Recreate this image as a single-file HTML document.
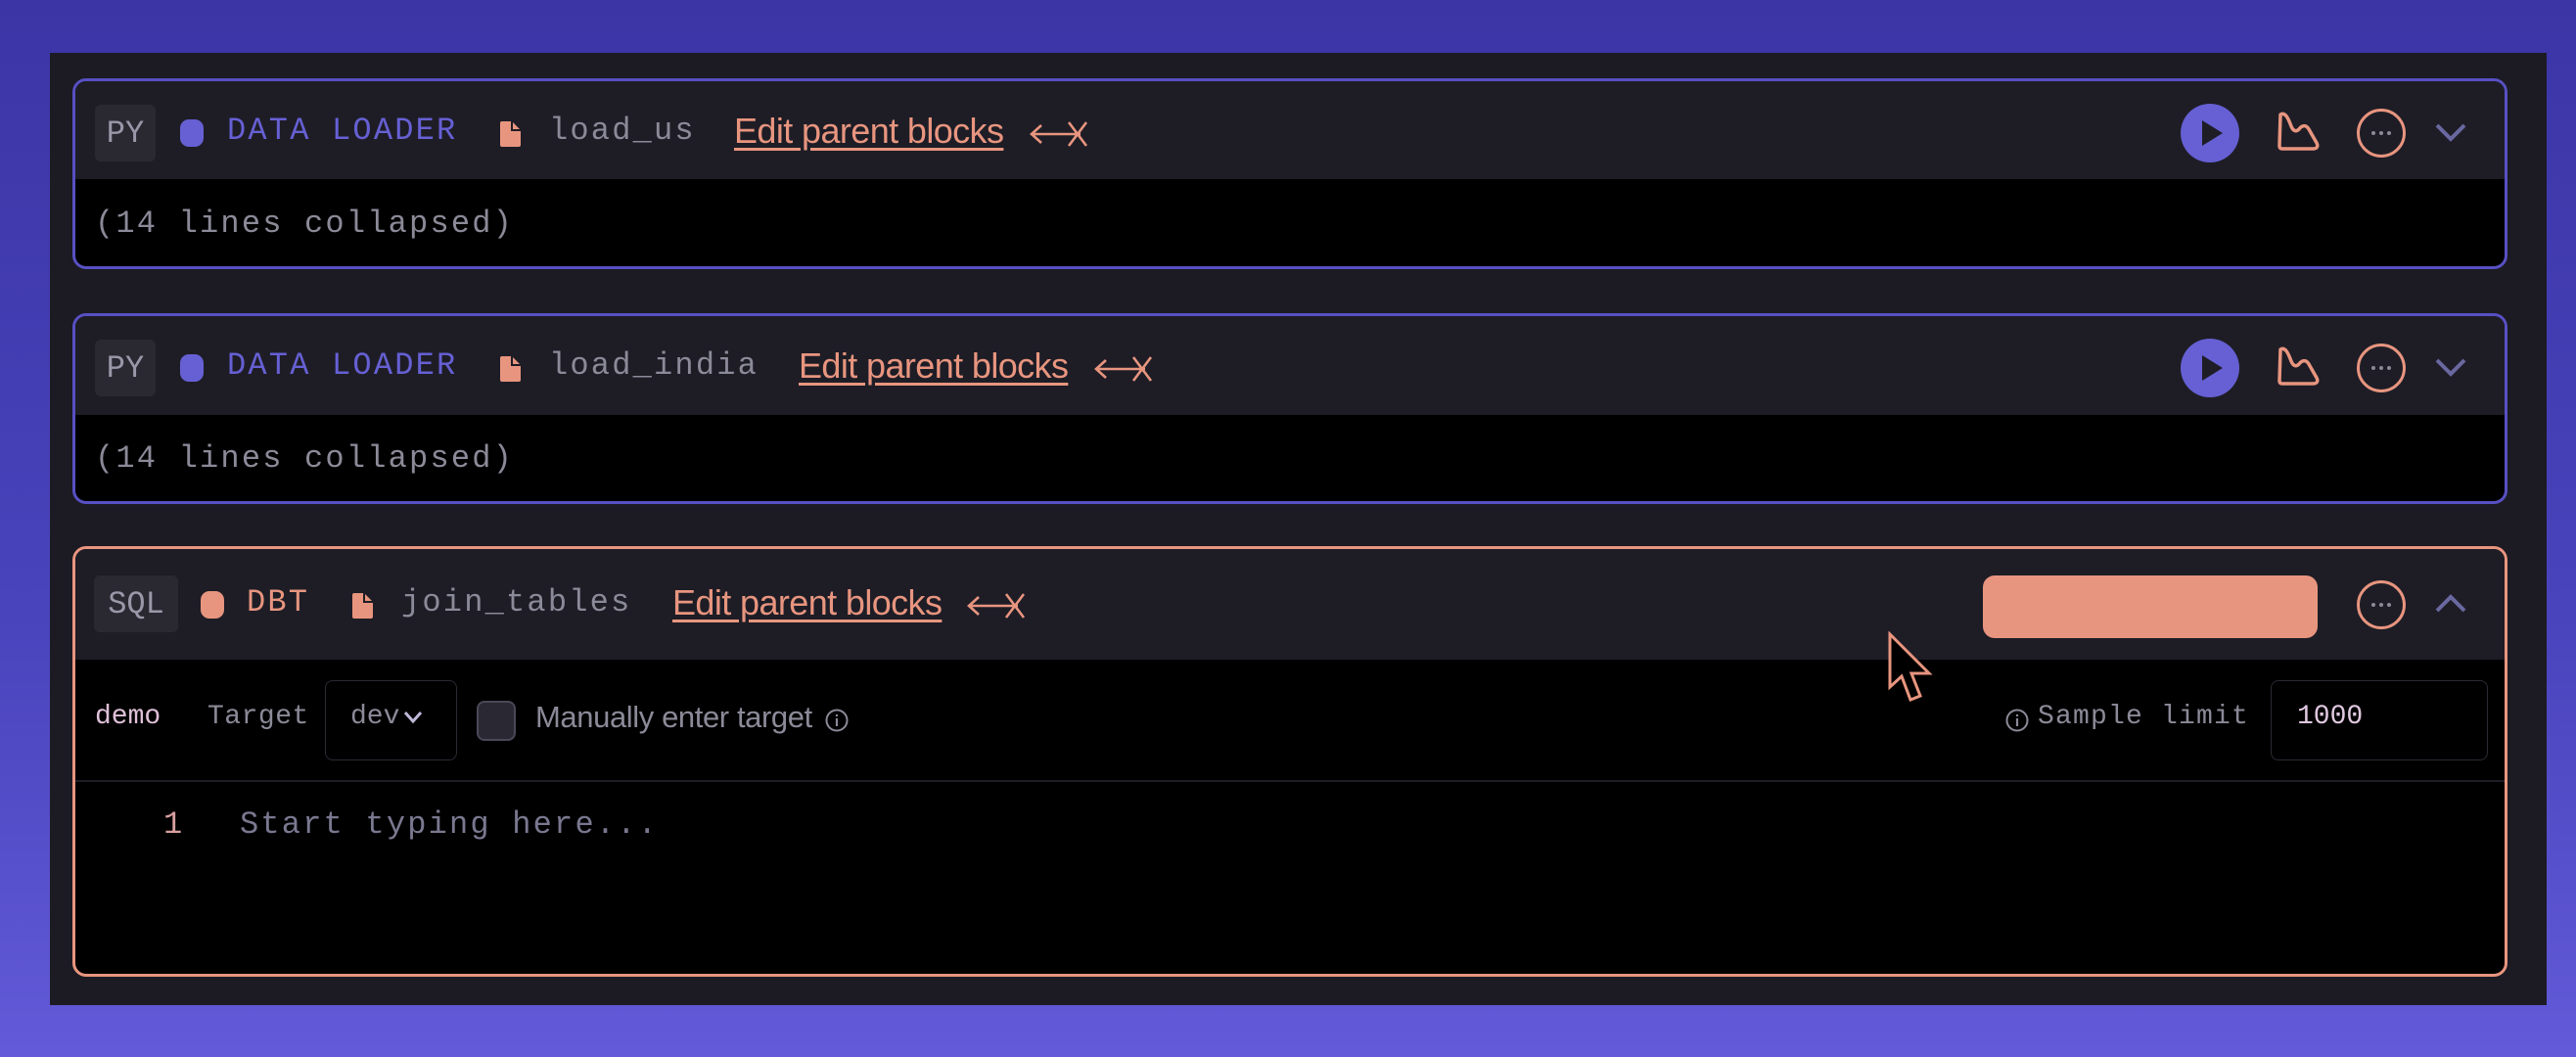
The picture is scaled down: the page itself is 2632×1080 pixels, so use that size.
<!DOCTYPE html>
<html><head><meta charset="utf-8"><style>
*{margin:0;padding:0;box-sizing:border-box}
body{width:2632px;height:1080px;overflow:hidden;background:linear-gradient(180deg,#3b35a6 0%,#4a44bd 60%,#625ad8 100%);position:relative;font-family:"Liberation Mono",monospace}
.panel{position:absolute;left:51px;top:54px;width:2551px;height:973px;background:#1c1b23}
.card{position:absolute;left:74px;width:2488px;border:3px solid #5850c4;border-radius:14px;overflow:hidden;background:#000}
.hdr{position:absolute;left:0;top:0;right:0;background:#1e1d26}
.a{position:absolute;white-space:nowrap}
.mono{font-family:"Liberation Mono",monospace;font-size:32px;letter-spacing:2.2px}
.badge{position:absolute;background:#2a2932;border-radius:6px;color:#9a98a8;font-size:32px;display:flex;align-items:center;justify-content:center;letter-spacing:0}
.dot{position:absolute;width:24px;height:28px;border-radius:9px}
.sans{font-family:"Liberation Sans",sans-serif}
.edit{color:#e8957f;font-size:36px;text-decoration:underline;text-underline-offset:5px;letter-spacing:-0.6px}
.gray{color:#8b8a98}
</style></head><body>
<div class="panel"></div>

<!-- card 1 -->
<div class="card" style="top:80px;height:195px">
 <div class="hdr" style="height:100px"></div>
 <div class="badge mono" style="left:20px;top:24px;width:62px;height:58px">PY</div>
 <div class="dot" style="left:107px;top:39px;background:#6660d4"></div>
 <div class="a mono" style="left:155px;top:32px;color:#6660d4">DATA LOADER</div>
 <svg class="a" style="left:433px;top:40px" width="24" height="28" viewBox="0 0 24 28"><path d="M3 1h10l9 9v15a2 2 0 0 1-2 2H3a2 2 0 0 1-2-2V3a2 2 0 0 1 2-2z" fill="#e8957f"/><path d="M13 1v9h9" fill="none" stroke="#1e1d26" stroke-width="2"/></svg>
 <div class="a mono gray" style="left:484px;top:32px">load_us</div>
 <div class="a sans edit" style="left:673px;top:30px">Edit parent blocks</div>
 <svg class="a" style="left:975px;top:38px" width="62" height="32" viewBox="0 0 62 32"><path d="M2 16h50M12 7l-10 9 10 9M40 4l18 24M58 4L40 28" fill="none" stroke="#e8957f" stroke-width="2.6"/></svg>
 <svg class="a" style="left:2150px;top:22px" width="62" height="62"><circle cx="31" cy="31" r="30" fill="#6660d4"/><path d="M23 18v26l21-13z" fill="#1e1d26"/></svg>
 <svg class="a" style="left:2247px;top:28px" width="50" height="50" viewBox="0 0 50 50"><path d="M6 6c5-3 8 4 11 12 2 5 5 6 8 3 3-4 7-5 10 0l8 14c2 4 0 6-4 6H8c-2 0-3-1-3-3z" fill="none" stroke="#e8957f" stroke-width="3.5" stroke-linejoin="round"/></svg>
 <svg class="a" style="left:2330px;top:27px" width="52" height="52"><circle cx="26" cy="26" r="23.5" fill="none" stroke="#e8957f" stroke-width="3"/><circle cx="18" cy="26" r="2" fill="#8b8a98"/><circle cx="26" cy="26" r="2" fill="#8b8a98"/><circle cx="34" cy="26" r="2" fill="#8b8a98"/></svg>
 <svg class="a" style="left:2410px;top:40px" width="34" height="24"><path d="M3 5l14 14 14-14" fill="none" stroke="#6a68a0" stroke-width="4"/></svg>
 <div class="a mono gray" style="left:20px;top:127px">(14 lines collapsed)</div>
</div>

<!-- card 2 -->
<div class="card" style="top:320px;height:195px">
 <div class="hdr" style="height:101px"></div>
 <div class="badge mono" style="left:20px;top:24px;width:62px;height:58px">PY</div>
 <div class="dot" style="left:107px;top:39px;background:#6660d4"></div>
 <div class="a mono" style="left:155px;top:32px;color:#6660d4">DATA LOADER</div>
 <svg class="a" style="left:433px;top:40px" width="24" height="28" viewBox="0 0 24 28"><path d="M3 1h10l9 9v15a2 2 0 0 1-2 2H3a2 2 0 0 1-2-2V3a2 2 0 0 1 2-2z" fill="#e8957f"/><path d="M13 1v9h9" fill="none" stroke="#1e1d26" stroke-width="2"/></svg>
 <div class="a mono gray" style="left:484px;top:32px">load_india</div>
 <div class="a sans edit" style="left:739px;top:30px">Edit parent blocks</div>
 <svg class="a" style="left:1041px;top:38px" width="62" height="32" viewBox="0 0 62 32"><path d="M2 16h50M12 7l-10 9 10 9M40 4l18 24M58 4L40 28" fill="none" stroke="#e8957f" stroke-width="2.6"/></svg>
 <svg class="a" style="left:2150px;top:22px" width="62" height="62"><circle cx="31" cy="31" r="30" fill="#6660d4"/><path d="M23 18v26l21-13z" fill="#1e1d26"/></svg>
 <svg class="a" style="left:2247px;top:28px" width="50" height="50" viewBox="0 0 50 50"><path d="M6 6c5-3 8 4 11 12 2 5 5 6 8 3 3-4 7-5 10 0l8 14c2 4 0 6-4 6H8c-2 0-3-1-3-3z" fill="none" stroke="#e8957f" stroke-width="3.5" stroke-linejoin="round"/></svg>
 <svg class="a" style="left:2330px;top:27px" width="52" height="52"><circle cx="26" cy="26" r="23.5" fill="none" stroke="#e8957f" stroke-width="3"/><circle cx="18" cy="26" r="2" fill="#8b8a98"/><circle cx="26" cy="26" r="2" fill="#8b8a98"/><circle cx="34" cy="26" r="2" fill="#8b8a98"/></svg>
 <svg class="a" style="left:2410px;top:40px" width="34" height="24"><path d="M3 5l14 14 14-14" fill="none" stroke="#6a68a0" stroke-width="4"/></svg>
 <div class="a mono gray" style="left:20px;top:127px">(14 lines collapsed)</div>
</div>

<!-- card 3 -->
<div class="card" style="top:558px;height:440px;border-color:#e8957f">
 <div class="hdr" style="height:113px"></div>
 <div class="badge mono" style="left:19px;top:27px;width:86px;height:58px">SQL</div>
 <div class="dot" style="left:128px;top:43px;background:#e8957f"></div>
 <div class="a mono" style="left:175px;top:36px;color:#e8957f">DBT</div>
 <svg class="a" style="left:282px;top:44px" width="24" height="28" viewBox="0 0 24 28"><path d="M3 1h10l9 9v15a2 2 0 0 1-2 2H3a2 2 0 0 1-2-2V3a2 2 0 0 1 2-2z" fill="#e8957f"/><path d="M13 1v9h9" fill="none" stroke="#1e1d26" stroke-width="2"/></svg>
 <div class="a mono gray" style="left:333px;top:36px">join_tables</div>
 <div class="a sans edit" style="left:610px;top:34px">Edit parent blocks</div>
 <svg class="a" style="left:911px;top:42px" width="62" height="32" viewBox="0 0 62 32"><path d="M2 16h50M12 7l-10 9 10 9M40 4l18 24M58 4L40 28" fill="none" stroke="#e8957f" stroke-width="2.6"/></svg>
 <div class="a" style="left:1949px;top:27px;width:342px;height:64px;background:#e8957f;border-radius:12px"></div>
 <svg class="a" style="left:2330px;top:31px" width="52" height="52"><circle cx="26" cy="26" r="23.5" fill="none" stroke="#e8957f" stroke-width="3"/><circle cx="18" cy="26" r="2" fill="#8b8a98"/><circle cx="26" cy="26" r="2" fill="#8b8a98"/><circle cx="34" cy="26" r="2" fill="#8b8a98"/></svg>
 <svg class="a" style="left:2410px;top:44px" width="34" height="24"><path d="M3 19l14-14 14 14" fill="none" stroke="#6a68a0" stroke-width="4"/></svg>

 <div class="a mono" style="left:20px;top:156px;font-size:28px;letter-spacing:0;color:#e0c0d8">demo</div>
 <div class="a mono gray" style="left:135px;top:156px;font-size:28px;letter-spacing:0.5px">Target</div>
 <div class="a" style="left:255px;top:134px;width:135px;height:82px;border:1.5px solid #2a2a33;border-radius:8px"></div>
 <div class="a mono gray" style="left:281px;top:156px;font-size:28px;letter-spacing:0">dev</div>
 <svg class="a" style="left:334px;top:164px" width="22" height="16"><path d="M3 3l8 9 8-9" fill="none" stroke="#c0b8d8" stroke-width="3"/></svg>
 <div class="a" style="left:410px;top:155px;width:40px;height:41px;background:#2a2933;border:2px solid #4a4858;border-radius:8px"></div>
 <div class="a sans gray" style="left:470px;top:154px;font-size:31px;letter-spacing:-0.4px">Manually enter target</div>
 <svg class="a" style="left:765px;top:162px" width="26" height="26"><circle cx="13" cy="13" r="10.5" fill="none" stroke="#8b8a98" stroke-width="2"/><path d="M13 11v8M13 7v2" stroke="#8b8a98" stroke-width="2.2"/></svg>
 <svg class="a" style="left:1971px;top:162px" width="26" height="26"><circle cx="13" cy="13" r="10.5" fill="none" stroke="#8b8a98" stroke-width="2"/><path d="M13 11v8M13 7v2" stroke="#8b8a98" stroke-width="2.2"/></svg>
 <div class="a mono gray" style="left:2005px;top:156px;font-size:28px;letter-spacing:1.2px">Sample limit</div>
 <div class="a" style="left:2243px;top:134px;width:222px;height:82px;border:1.5px solid #2a2a33;border-radius:8px"></div>
 <div class="a mono" style="left:2270px;top:156px;font-size:28px;letter-spacing:0;color:#e0c8e0">1000</div>
 <div class="a" style="left:0;right:0;top:236px;height:2px;background:#1e1d26"></div>
 <div class="a mono" style="left:90px;top:263px;color:#d8a0a0;font-size:32px">1</div>
 <div class="a mono gray" style="left:168px;top:263px;color:#7a7890">Start typing here...</div>
</div>

<svg class="a" style="left:1928px;top:645px" width="56" height="80" viewBox="0 0 56 80"><path d="M3 3v54l12-11 9 24 10-4-9-23h18z" fill="#000" stroke="#e8957f" stroke-width="3" stroke-linejoin="miter"/></svg>
</body></html>
